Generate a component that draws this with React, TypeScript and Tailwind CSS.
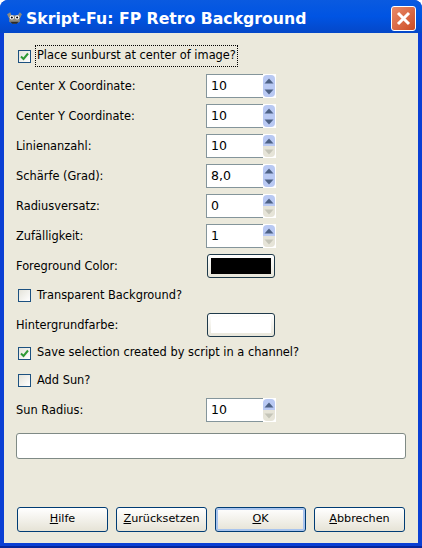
import { ReactNode } from "react";

const font = { fontFamily: '"DejaVu Sans", sans-serif' };

const Arrow = ({ up, active }: { up: boolean; active: boolean }) => (
  <svg width="10" height="6" viewBox="0 0 10 6">
    <path d={up ? "M5 0.5 L9.5 5.5 L0.5 5.5 Z" : "M5 5.5 L9.5 0.5 L0.5 0.5 Z"} fill={active ? "#4d6185" : "#c4c4b8"} />
  </svg>
);

const Spin = ({ value, downActive = true }: { value: string; downActive?: boolean }) => (
  <div className="flex h-[24px] w-[70px] bg-white">
    <div className="flex w-[57px] items-center border border-r-0 border-[#84959b] bg-white pl-[4px] text-[12.5px] text-black">
      {value}
    </div>
    <div className="flex w-[13px] flex-col border border-l-0 border-white">
      <div className="flex h-[11px] items-center justify-center rounded-t-sm bg-[#b9c9f3]">
        <Arrow up active />
      </div>
      <div
        className={
          downActive
            ? "flex h-[11px] items-center justify-center rounded-b-sm bg-[#b9c9f3]"
            : "flex h-[11px] items-center justify-center rounded-b-sm bg-[#e6e4d8]"
        }
      >
        <Arrow up={false} active={downActive} />
      </div>
    </div>
  </div>
);

const Row = ({ label, children }: { label: string; children: ReactNode }) => (
  <div className="flex h-[30px] items-center">
    <span className="w-[190px] pt-[2px] text-[11.4px] text-black">{label}</span>
    {children}
  </div>
);

const Check = ({ checked }: { checked: boolean }) => (
  <div className="flex h-[13px] w-[13px] shrink-0 items-center justify-center border border-[#1c5180] bg-gradient-to-br from-[#e4e3da] to-white">
    {checked && (
      <svg width="9" height="9" viewBox="0 0 9 9">
        <path d="M1 4.5 L3.5 7 L8 1.5" fill="none" stroke="#2f9a35" strokeWidth="2" />
      </svg>
    )}
  </div>
);

const CheckRow = ({ label, checked, h }: { label: string; checked: boolean; h: string }) => (
  <div className={`flex items-center gap-[6px] pl-[2px] text-[11.4px] text-black ${h}`}>
    <Check checked={checked} />
    <span>{label}</span>
  </div>
);

const ColorButton = ({ black }: { black: boolean }) => (
  <div className="ml-[1px] h-[24px] w-[68px] rounded-[3px] border border-[#1f3a4a] bg-gradient-to-b from-white to-[#e8e6da] p-[3px]">
    <div className={black ? "h-full w-full bg-black" : "h-full w-full bg-white"} />
  </div>
);

const DialogButton = ({ mnemonic, rest, focused }: { mnemonic: string; rest: string; focused?: boolean }) => (
  <button
    className={
      focused
        ? "h-[25px] w-[91px] rounded-[3px] border border-[#003c74] bg-gradient-to-b from-white to-[#e6e3d6] text-[11.2px] text-black shadow-[inset_0_0_0_2px_#a8c4ee]"
        : "h-[25px] w-[91px] rounded-[3px] border border-[#003c74] bg-gradient-to-b from-white to-[#e6e3d6] text-[11.2px] text-black"
    }
  >
    <span className="underline">{mnemonic}</span>
    {rest}
  </button>
);

export default function App() {
  return (
    <div style={font} className="flex h-[548px] w-[422px] flex-col overflow-hidden rounded-t-lg border-b-2 border-[#06259a] bg-[#0a3fd4]">
      {/* title bar */}
      <div className="flex h-[33px] shrink-0 items-center bg-gradient-to-b from-[#0a5ae0] via-[#0054e3] to-[#0447c8] pl-[6px] pr-[6px] pt-[4px]">
        <svg width="17" height="15" viewBox="0 0 16 14" className="shrink-0">
          <path d="M1 3 L4 1 L5 4 L11 4 L13 1 L15 3 L13 7 L13 10 Q8 14 3 10 L3 7 Z" fill="#8d8a80" />
          <circle cx="5.5" cy="6" r="2" fill="#fff" />
          <circle cx="10.5" cy="6" r="2" fill="#fff" />
          <circle cx="5.5" cy="6" r="1" fill="#000" />
          <circle cx="10.5" cy="6" r="1" fill="#000" />
          <path d="M4 10 L12 10 L10 12 L6 12 Z" fill="#2a2a2a" />
        </svg>
        <span className="ml-[3px] text-[15.7px] font-bold text-white">Skript-Fu: FP Retro Background</span>
        <div className="ml-auto flex h-[25px] w-[25px] items-center justify-center rounded-[3px] border border-white bg-gradient-to-br from-[#e88a68] to-[#cc4a22]">
          <svg width="15" height="15" viewBox="0 0 15 15">
            <path d="M2 2 L13 13 M13 2 L2 13" stroke="#fff" strokeWidth="3" />
          </svg>
        </div>
      </div>

      {/* client area */}
      <div className="mx-[4px] mb-[3px] flex flex-1 flex-col bg-[#ebe9dc] pl-[12px] pr-[12px] pt-[8px]">
        <div className="flex h-[30px] items-center gap-[4px] pl-[2px] text-[11.4px] text-black">
          <Check checked />
          <span className="border border-dotted border-black px-[1px] py-[1px]">Place sunburst at center of image?</span>
        </div>
        <Row label="Center X Coordinate:"><Spin value="10" /></Row>
        <Row label="Center Y Coordinate:"><Spin value="10" /></Row>
        <Row label="Linienanzahl:"><Spin value="10" downActive={false} /></Row>
        <Row label="Schärfe (Grad):"><Spin value="8,0" /></Row>
        <Row label="Radiusversatz:"><Spin value="0" downActive={false} /></Row>
        <Row label="Zufälligkeit:"><Spin value="1" downActive={false} /></Row>
        <Row label="Foreground Color:"><ColorButton black /></Row>
        <CheckRow label="Transparent Background?" checked={false} h="h-[29px]" />
        <Row label="Hintergrundfarbe:"><ColorButton black={false} /></Row>
        <CheckRow label="Save selection created by script in a channel?" checked h="h-[26px]" />
        <CheckRow label="Add Sun?" checked={false} h="h-[29px]" />
        <Row label="Sun Radius:"><Spin value="10" downActive={false} /></Row>

        <div className="mt-[8px] h-[26px] w-[390px] rounded-[3px] border border-[#7f8a85] bg-white" />

        <div className="mt-[48px] flex justify-between pl-[1px] pr-[1px]">
          <DialogButton mnemonic="H" rest="ilfe" />
          <DialogButton mnemonic="Z" rest="urücksetzen" />
          <DialogButton mnemonic="O" rest="K" focused />
          <DialogButton mnemonic="A" rest="bbrechen" />
        </div>
      </div>
    </div>
  );
}
